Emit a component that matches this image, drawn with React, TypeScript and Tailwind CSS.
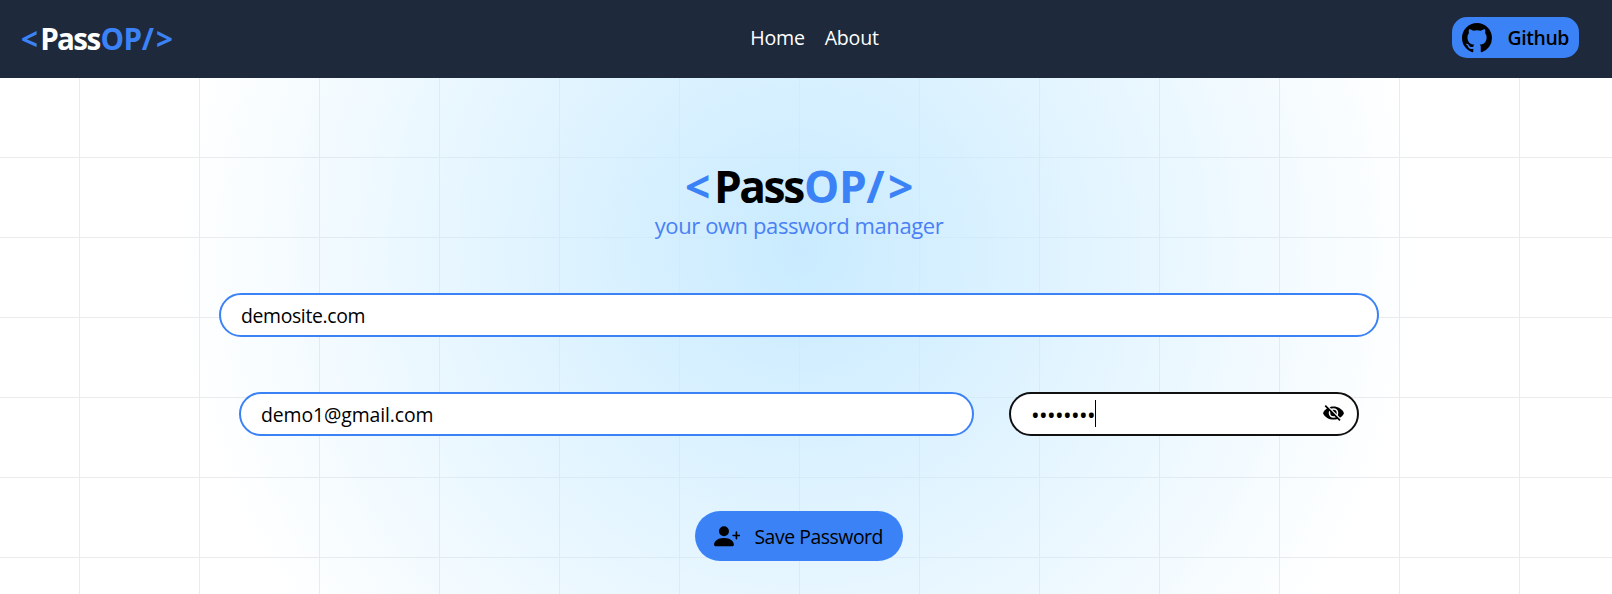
import React from "react";
import { BsPersonPlusFill, BsGithub } from "react-icons/bs";

const field = "flex h-11 items-center rounded-full border-2 bg-white px-5";

function Brand({ className, name }: { className: string; name: string }) {
  return (
    <div className={className}>
      <span className="mr-[0.09em] text-[#3b82f6]">&lt;</span>
      <span className={`tracking-[-0.055em] ${name}`}>Pass</span>
      <span className="ml-[0.03em] text-[#3b82f6]">OP/</span>
      <span className="ml-[0.09em] text-[#3b82f6]">&gt;</span>
    </div>
  );
}

function EyeOff() {
  return (
    <svg width="21" height="16" viewBox="0 0 21 16" className="mr-[-7px] mb-[3px] ml-auto">
      <path d="M0 8.2C2 4 5.8 1.6 10.5 1.6S19 4 21 8.2c-2 4.2-5.8 6.3-10.5 6.3S2 12.4 0 8.2Z" />
      <circle cx="10.5" cy="8" r="4" fill="none" stroke="#fff" strokeWidth="1.6" />
      <path d="m3.4 0 14.5 14.6" stroke="#fff" strokeWidth="1.5" />
      <path d="m2.2.6 14.8 14.8" stroke="#000" strokeWidth="1.7" />
    </svg>
  );
}

export default function App() {
  return (
    <div
      className="h-[594px] w-full overflow-hidden bg-white text-[19.4px] text-black"
      style={{ fontFamily: '"Open Sans", "Noto Sans", sans-serif' }}
    >
      <div className="flex h-full flex-col bg-[radial-gradient(circle_625px_at_799px_250px,#C9EBFF,transparent),linear-gradient(to_right,#ebebeb_1px,transparent_1px),linear-gradient(to_bottom,#ebebeb_1px,transparent_1px)] bg-[size:100%_100%,120px_80px,120px_80px] bg-[position:0_0,79px_-3px,79px_-3px]">
        <nav className="flex h-[78px] shrink-0 items-center justify-between bg-[#1e293b] pr-[33px] pb-[3px] pl-[21px]">
          <Brand className="w-[156px] pt-[3px] text-[29.6px] leading-9 font-bold tracking-[-0.015em] whitespace-nowrap" name="text-white" />
          <div className="flex gap-5 pt-px text-[19.6px] tracking-[-0.25px] text-white">
            <a>Home</a>
            <a>About</a>
          </div>
          <button className="flex h-[41px] w-[127px] items-center justify-between rounded-[15px] bg-[#3b82f6] px-2.5 font-semibold tracking-[-0.4px]">
            <BsGithub size={30} />
            Github
          </button>
        </nav>
        <main className="flex w-[1598px] flex-col items-center pt-[83px]">
          <Brand className="text-[44.3px] leading-[50px] font-bold tracking-[-0.01em]" name="text-black" />
          <p className="text-[22px] leading-7 tracking-[-0.4px] text-[#4a80f5]">your own password manager</p>
          <div className={`${field} mt-[54px] w-[1160px] border-[#3b82f6] pt-0.5 tracking-[-0.35px]`}>demosite.com</div>
          <div className="mt-[55px] flex w-[1120px] justify-between">
            <div className={`${field} w-[735px] border-[#3b82f6] pt-0.5 tracking-[-0.1px]`}>demo1@gmail.com</div>
            <div className={`${field} w-[350px] border-[#101010]`}>
              <span className="w-16 pt-[3px] text-[23px] tracking-[-0.65px] whitespace-nowrap">••••••••</span>
              <span className="mb-0.5 h-[27px] w-px bg-black" />
              <EyeOff />
            </div>
          </div>
          <button className="mt-[75px] flex h-[50px] w-[208px] items-center justify-between rounded-full bg-[#3b82f6] pr-5 pl-[18.5px] tracking-[-0.45px]">
            <BsPersonPlusFill size={26.6} />
            <span className="pt-0.5">Save Password</span>
          </button>
        </main>
      </div>
    </div>
  );
}
